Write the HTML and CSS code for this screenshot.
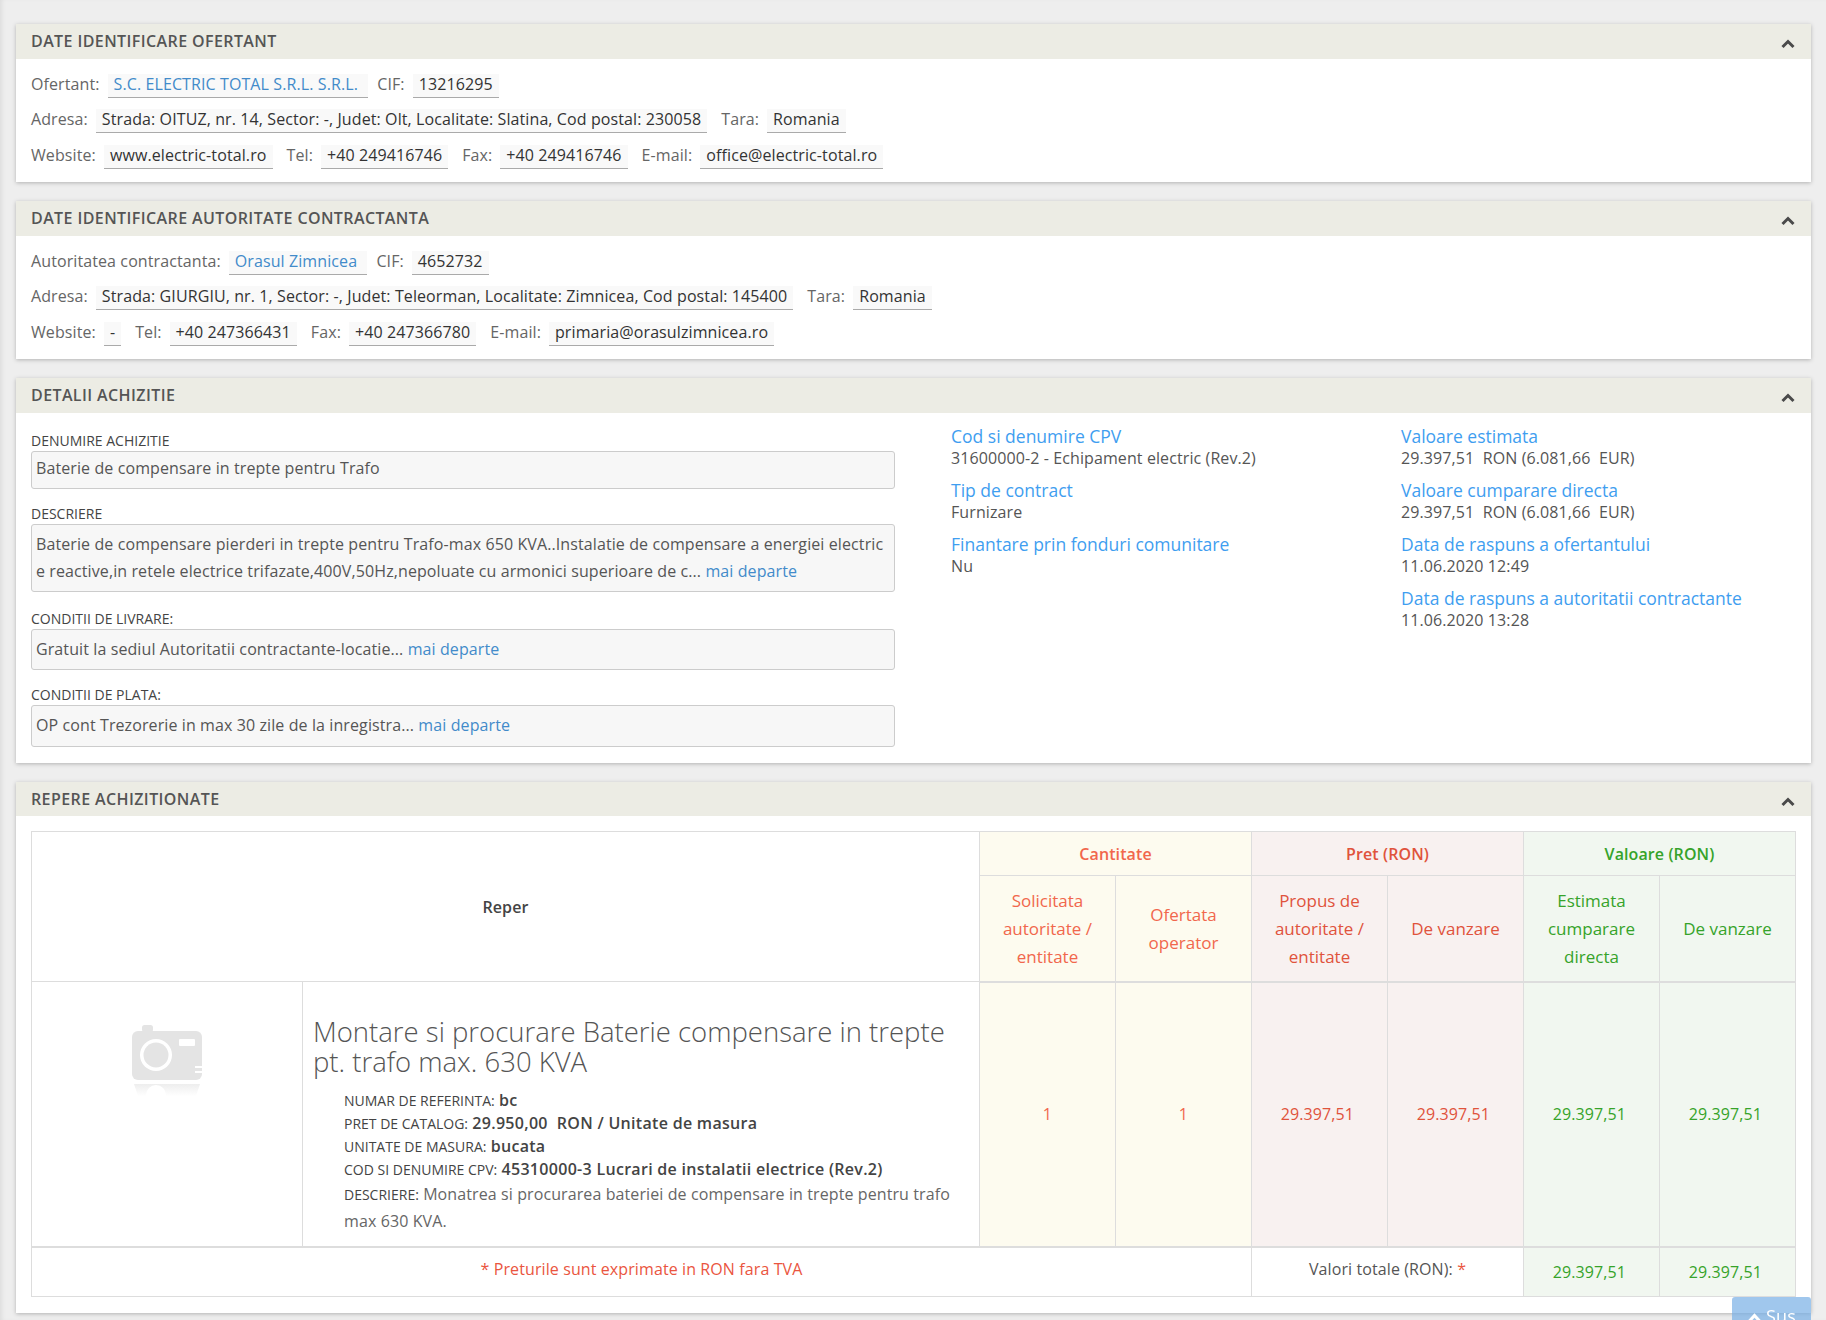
FILE: index.html
```html
<!DOCTYPE html>
<html>

<head lang="ro">
    <meta charset="UTF-8">
    <title>Detalii achizitie</title>
    <link rel="stylesheet" href="styles.css">
</head>

<body>

    <div class="panel">
        <div class="panel-title">Date identificare ofertant
            <svg class="panel-toggle" viewBox="0 0 14 10"><path d="M1.5 8 7 2.5 12.5 8"/></svg>
        </div>
        <div class="panel-body">
            <div class="info-row">
                <span class="info-label">Ofertant:</span><a class="info-value link" href="#">S.C. ELECTRIC TOTAL S.R.L. S.R.L.&nbsp;</a>
                <span class="info-label">CIF:</span><span class="info-value">13216295</span>
            </div>
            <div class="info-row">
                <span class="info-label">Adresa:</span><span class="info-value">Strada: OITUZ, nr. 14, Sector: -, Judet: Olt, Localitate: Slatina, Cod postal: 230058</span>
                <span class="info-label">Tara:</span><span class="info-value">Romania</span>
            </div>
            <div class="info-row">
                <span class="info-label">Website:</span><span class="info-value">www.electric-total.ro</span>
                <span class="info-label">Tel:</span><span class="info-value">+40 249416746</span>
                <span class="info-label">Fax:</span><span class="info-value">+40 249416746</span>
                <span class="info-label">E-mail:</span><span class="info-value">office@electric-total.ro</span>
            </div>
        </div>
    </div>

    <div class="panel">
        <div class="panel-title">Date identificare autoritate contractanta
            <svg class="panel-toggle" viewBox="0 0 14 10"><path d="M1.5 8 7 2.5 12.5 8"/></svg>
        </div>
        <div class="panel-body">
            <div class="info-row">
                <span class="info-label">Autoritatea contractanta:</span><a class="info-value link" href="#">Orasul Zimnicea&nbsp;</a>
                <span class="info-label">CIF:</span><span class="info-value">4652732</span>
            </div>
            <div class="info-row">
                <span class="info-label">Adresa:</span><span class="info-value">Strada: GIURGIU, nr. 1, Sector: -, Judet: Teleorman, Localitate: Zimnicea, Cod postal: 145400</span>
                <span class="info-label">Tara:</span><span class="info-value">Romania</span>
            </div>
            <div class="info-row">
                <span class="info-label">Website:</span><span class="info-value">-</span>
                <span class="info-label">Tel:</span><span class="info-value">+40 247366431</span>
                <span class="info-label">Fax:</span><span class="info-value">+40 247366780</span>
                <span class="info-label">E-mail:</span><span class="info-value">primaria@orasulzimnicea.ro</span>
            </div>
        </div>
    </div>

    <div class="panel">
        <div class="panel-title">Detalii achizitie
            <svg class="panel-toggle" viewBox="0 0 14 10"><path d="M1.5 8 7 2.5 12.5 8"/></svg>
        </div>
        <div class="panel-body details">
            <div class="details-form">
                <label>Denumire achizitie</label>
                <div class="form-box box-name">Baterie de compensare in trepte pentru Trafo</div>
                <label>Descriere</label>
                <div class="form-box box-desc">Baterie de compensare pierderi in trepte pentru Trafo-max 650 KVA..Instalatie de compensare a energiei electric<br>e reactive,in retele electrice trifazate,400V,50Hz,nepoluate cu armonici superioare de c... <a class="link" href="#">mai departe</a></div>
                <label>Conditii de livrare:</label>
                <div class="form-box box-cond">Gratuit la sediul Autoritatii contractante-locatie... <a class="link" href="#">mai departe</a></div>
                <label>Conditii de plata:</label>
                <div class="form-box box-cond">OP cont Trezorerie in max 30 zile de la inregistra... <a class="link" href="#">mai departe</a></div>
            </div>
            <div class="details-col first">
                <h4>Cod si denumire CPV</h4>
                <p>31600000-2 - Echipament electric (Rev.2)</p>
                <h4>Tip de contract</h4>
                <p>Furnizare</p>
                <h4>Finantare prin fonduri comunitare</h4>
                <p>Nu</p>
            </div>
            <div class="details-col">
                <h4>Valoare estimata</h4>
                <p>29.397,51&nbsp; RON (6.081,66&nbsp; EUR)</p>
                <h4>Valoare cumparare directa</h4>
                <p>29.397,51&nbsp; RON (6.081,66&nbsp; EUR)</p>
                <h4>Data de raspuns a ofertantului</h4>
                <p>11.06.2020 12:49</p>
                <h4>Data de raspuns a autoritatii contractante</h4>
                <p>11.06.2020 13:28</p>
            </div>
        </div>
    </div>

    <div class="panel">
        <div class="panel-title">Repere achizitionate
            <svg class="panel-toggle" viewBox="0 0 14 10"><path d="M1.5 8 7 2.5 12.5 8"/></svg>
        </div>
        <div class="panel-body items">
            <table class="items-table">
                <colgroup>
                    <col class="col-img">
                    <col class="col-text">
                    <col class="col-num">
                    <col class="col-num">
                    <col class="col-num">
                    <col class="col-num">
                    <col class="col-num">
                    <col class="col-num">
                </colgroup>
                <tr class="row-group">
                    <th colspan="2" rowspan="2" class="th-reper">Reper</th>
                    <th colspan="2" class="yellow">Cantitate</th>
                    <th colspan="2" class="red">Pret (RON)</th>
                    <th colspan="2" class="green">Valoare (RON)</th>
                </tr>
                <tr class="row-head">
                    <td class="yellow">Solicitata autoritate / entitate</td>
                    <td class="yellow">Ofertata operator</td>
                    <td class="red">Propus de autoritate / entitate</td>
                    <td class="red">De vanzare</td>
                    <td class="green">Estimata cumparare directa</td>
                    <td class="green">De vanzare</td>
                </tr>
                <tr class="row-item">
                    <td class="cell-img">
                        <svg class="no-photo" viewBox="0 0 70 72">
                            <defs>
                                <linearGradient id="fade" x1="0" y1="0" x2="0" y2="1">
                                    <stop offset="0" stop-color="#e6e6e6" stop-opacity=".7"/>
                                    <stop offset="1" stop-color="#e6e6e6" stop-opacity="0"/>
                                </linearGradient>
                            </defs>
                            <rect x="10" y="0" width="11" height="7" rx="2.5" fill="#e4e4e4"/>
                            <rect x="0" y="6" width="70" height="49" rx="6" fill="#e4e4e4"/>
                            <circle cx="24" cy="30" r="16" fill="#fff"/>
                            <circle cx="24" cy="30" r="12.5" fill="#e4e4e4"/>
                            <rect x="47" y="14" width="16" height="7" rx="1" fill="#fff"/>
                            <rect x="63" y="41" width="7" height="2" fill="#fff"/>
                            <rect x="63" y="46" width="7" height="2" fill="#fff"/>
                            <path d="M2 59H68L64 71H6Z" fill="url(#fade)"/>
                            <circle cx="24" cy="70" r="10" fill="#fff"/>
                        </svg>
                    </td>
                    <td class="cell-text">
                        <h3>Montare si procurare Baterie compensare in trepte pt. trafo max. 630 KVA</h3>
                        <ul class="item-meta">
                            <li><small>Numar de referinta:</small> <b>bc</b></li>
                            <li><small>Pret de catalog:</small> <b>29.950,00&nbsp; RON / Unitate de masura</b></li>
                            <li><small>Unitate de masura:</small> <b>bucata</b></li>
                            <li><small>Cod si denumire CPV:</small> <b>45310000-3 Lucrari de instalatii electrice (Rev.2)</b></li>
                            <li class="item-desc"><small>Descriere:</small> Monatrea si procurarea bateriei de compensare in trepte pentru trafo max 630 KVA.</li>
                        </ul>
                    </td>
                    <td class="yellow">1</td>
                    <td class="yellow">1</td>
                    <td class="red">29.397,51&nbsp;</td>
                    <td class="red">29.397,51&nbsp;</td>
                    <td class="green">29.397,51&nbsp;</td>
                    <td class="green">29.397,51&nbsp;</td>
                </tr>
                <tr class="row-total">
                    <td colspan="4" class="note">* Preturile sunt exprimate in RON fara TVA</td>
                    <td colspan="2" class="total-label">Valori totale (RON): <span class="star">*</span></td>
                    <td class="green">29.397,51&nbsp;</td>
                    <td class="green">29.397,51&nbsp;</td>
                </tr>
            </table>
        </div>
    </div>

    <a class="to-top" href="#">
        <svg viewBox="0 0 15 10"><path d="M1.5 9 7.5 2.5 13.5 9"/></svg>Sus
    </a>

</body>

</html>
```

FILE: styles.css
```css
html,
body,
h3,
h4,
p,
ul,
li {
    padding: 0px;
    margin: 0px;
}

html {
    height: 100%;
    overflow: hidden;
}

body {
    height: 100%;
    box-sizing: border-box;
    padding: 24px 15px 0px 16px;
    background: #eeeeee;
    box-shadow: inset 4px 0px 4px -2px #dddddd;
    font-family: "Open Sans", "Liberation Sans", sans-serif;
    font-size: 16px;
    letter-spacing: 0.1px;
    color: #444444;
}

a {
    text-decoration: none;
}

.link {
    color: #428bca;
}

/* panels */
.panel {
    margin-bottom: 19px;
    background: #ffffff;
    box-shadow: 0px 1px 4px rgba(0, 0, 0, 0.25);
}

.panel-title {
    position: relative;
    height: 34.5px;
    padding-left: 15px;
    background: #ecece4;
    font-size: 16px;
    font-weight: 600;
    letter-spacing: 0.4px;
    line-height: 35px;
    text-transform: uppercase;
    color: #555555;
}

.panel-toggle {
    position: absolute;
    right: 16px;
    top: 15px;
    width: 14px;
    height: 10px;
    fill: none;
    stroke: #4a4a4a;
    stroke-width: 3;
}

.panel-body {
    padding: 15px 15px 14px 15px;
}

/* label + value rows */
.info-row {
    display: flex;
    align-items: flex-start;
    height: 23.5px;
    margin-bottom: 12px;
    line-height: 21px;
}

.info-row:last-child {
    margin-bottom: 0px;
}

.info-label {
    color: #666666;
}

.info-value {
    height: 23px;
    margin: 0px 14px 0px 8px;
    padding: 0px 6px;
    background: #f9f9f9;
    border-bottom: 1px solid #aaaaaa;
    color: #333333;
}

.info-value.link {
    margin-right: 9px;
    color: #428bca;
}

/* detalii achizitie */
.details {
    display: flex;
    box-sizing: border-box;
    height: 350px;
    padding: 11px 0px 0px 15px;
}

.details-form {
    width: 864px;
    margin-top: 6px;
}

.details-form label {
    display: block;
    box-sizing: border-box;
    height: 21px;
    padding-top: 1px;
    font-size: 14px;
    letter-spacing: 0px;
    line-height: 19px;
    text-transform: uppercase;
    color: #444444;
}

.form-box {
    box-sizing: border-box;
    margin-bottom: 14px;
    padding-left: 4px;
    background: #f7f7f7;
    border: 1px solid #cccccc;
    border-radius: 3px;
    color: #555555;
    white-space: nowrap;
}

.box-name {
    height: 38px;
    line-height: 32px;
}

.box-desc {
    height: 68px;
    margin-bottom: 16px;
    padding-top: 6px;
    line-height: 27px;
}

.box-cond {
    height: 41.5px;
    line-height: 38px;
}

.details-col {
    width: 410px;
}

.details-col.first {
    width: 450px;
    margin-left: 56px;
}

.details-col h4 {
    font-size: 17.5px;
    font-weight: 400;
    letter-spacing: 0px;
    line-height: 24px;
    color: #3f9ef0;
}

.details-col p {
    margin-bottom: 10px;
    line-height: 20px;
    color: #555555;
}

/* repere */
.items {
    padding: 15px 15px 16px 15px;
}

.items-table {
    width: 100%;
    table-layout: fixed;
    border-collapse: collapse;
    text-align: center;
}

.items-table th,
.items-table td {
    padding: 0px;
    border: 1px solid #dddddd;
}

.items-table th {
    font-weight: 600;
}

.col-img {
    width: 271px;
}

.col-num {
    width: 136px;
}

.row-group {
    height: 44px;
}

.row-head {
    height: 106px;
}

.row-head td {
    padding: 2px 10px 0px 10px;
    font-size: 17px;
    letter-spacing: 0px;
    line-height: 28px;
    border-bottom-width: 2px;
}

.row-item {
    height: 265px;
}

.row-total {
    height: 50px;
}

.row-total td {
    border-top-width: 2px;
}

.yellow {
    background: #fdfbef;
    color: #f1674c;
}

.red {
    background: #f8f1f0;
    color: #e0533c;
}

.green {
    background: #f1f7f0;
    color: #36a32a;
}

.th-reper {
    color: #444444;
}

.cell-img {
    vertical-align: top;
}

.no-photo {
    display: block;
    width: 70px;
    height: 72px;
    margin: 43px 0px 0px 100px;
}

.items-table .cell-text {
    padding: 35px 10px 0px 10px;
    text-align: left;
    vertical-align: top;
}

.cell-text h3 {
    font-size: 27.5px;
    font-weight: 300;
    letter-spacing: 0px;
    line-height: 30px;
    color: #555555;
}

.item-meta {
    margin-top: 12px;
    padding-left: 31px;
    list-style: none;
}

.item-meta li {
    line-height: 23px;
}

.item-meta small {
    font-size: 14px;
    letter-spacing: 0px;
    text-transform: uppercase;
    color: #444444;
}

.item-meta b {
    font-weight: 600;
    letter-spacing: 0.3px;
    color: #444444;
}

.item-meta .item-desc {
    color: #666666;
    line-height: 26px;
}

.items-table .note {
    padding-bottom: 6px;
    color: #ea5540;
}

.items-table .total-label {
    padding-bottom: 6px;
    color: #555555;
}

.star {
    color: #ea5540;
}

/* back to top */
.to-top {
    position: fixed;
    right: 15px;
    bottom: -12px;
    width: 79px;
    height: 35px;
    box-sizing: border-box;
    padding-top: 7px;
    background: rgba(120, 175, 230, 0.7);
    border-radius: 3px 3px 0px 0px;
    text-align: center;
    font-size: 18px;
    line-height: 24px;
    color: #ffffff;
}

.to-top svg {
    width: 15px;
    height: 10px;
    margin-right: 4px;
    fill: none;
    stroke: #ffffff;
    stroke-width: 3;
}
```
